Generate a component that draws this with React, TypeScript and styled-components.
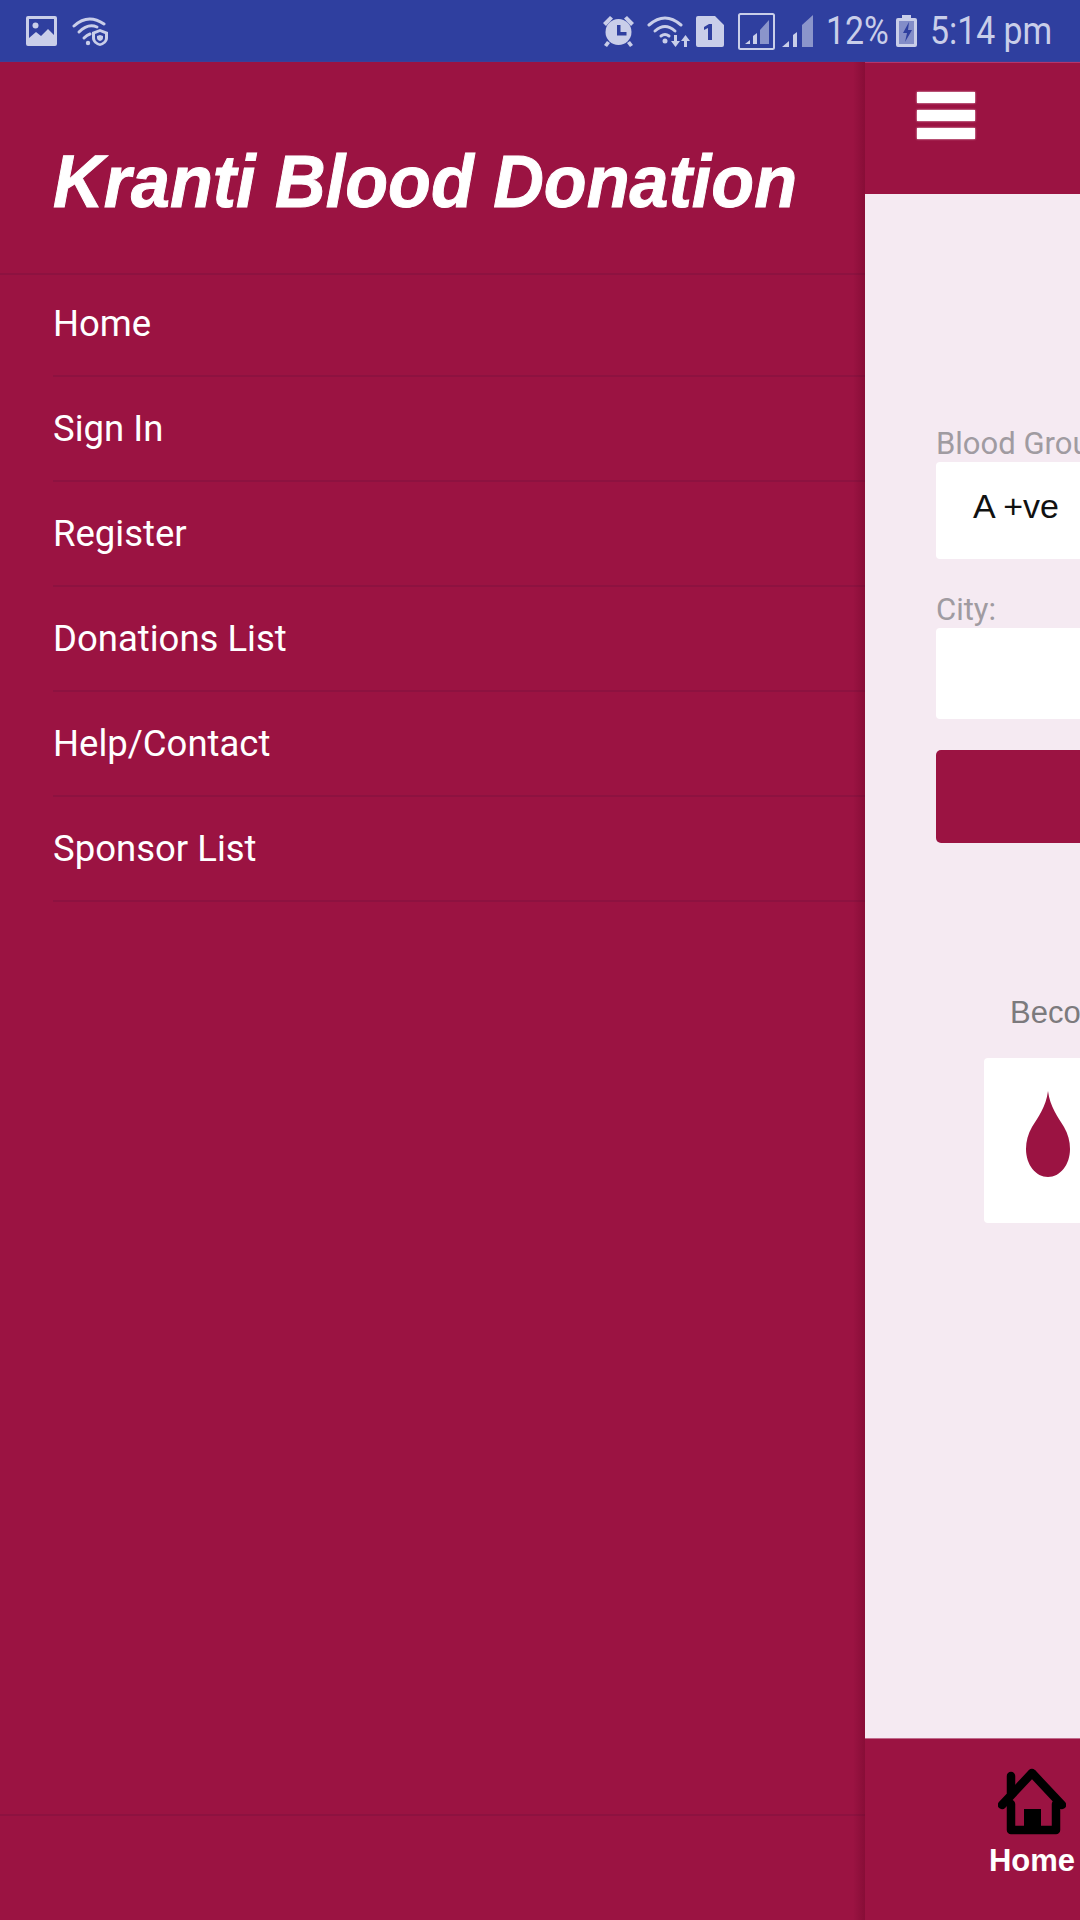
import React from "react";
import styled, { createGlobalStyle } from "styled-components";

const Global = createGlobalStyle`
  html, body { margin: 0; padding: 0; background: #9b1342; }
  * { box-sizing: border-box; }
`;

const Page = styled.div`
  width: 1080px; height: 1920px; overflow: hidden;
  display: flex; flex-direction: column;
  font-family: "Liberation Sans", Arial, sans-serif;
  background: #9b1342;
`;

const StatusBar = styled.header`
  height: 62px; flex: none; background: #2f3f9f; color: #c9cee9;
  display: flex; align-items: center; padding: 0 29px 0 26px;
  box-shadow: inset 0 -1px 0 #3c3f98;
`;
const StatusGroup = styled.div`
  display: flex; align-items: center;
`;
const StatusRight = styled(StatusGroup)`
  margin-left: auto;
`;
const StatusSlot = styled.div<{ $left: number }>`
  margin-left: ${(p) => p.$left}px; flex: none;
`;
const StatusText = styled.span<{ $width: number }>`
  font-family: Roboto, sans-serif; font-size: 38px; line-height: 42px;
  display: block; width: ${(p) => p.$width}px; white-space: nowrap;
  transform: scaleX(0.89); transform-origin: left center;
`;
const StatusIcon = styled.svg`
  display: block; flex: none; fill: currentColor;
`;

const Body = styled.div`
  flex: 1; display: flex; min-height: 0;
`;
const Drawer = styled.nav`
  width: 865px; flex: none; display: flex; flex-direction: column;
  background: #9b1342; color: #fff; position: relative;
  &::after {
    content: ""; position: absolute; top: 0; bottom: 0; right: 0; width: 12px;
    background: linear-gradient(to right, rgba(90, 0, 30, 0), rgba(90, 0, 30, 0.3));
  }
`;
const DrawerHeader = styled.div`
  height: 213px; flex: none; padding: 81px 0 0 53px;
  border-bottom: 2px solid #8d1240;
`;
const Title = styled.h1`
  margin: 0; font-size: 75px; line-height: 76px; font-weight: 700; font-style: italic;
  white-space: nowrap; display: inline-block;
  -webkit-text-stroke: 1px #fff;
  transform: scaleX(0.935); transform-origin: left center;
`;
const MenuList = styled.ul`
  list-style: none; margin: 0; padding: 0 0 0 53px; flex: 1;
`;
const MenuItem = styled.li`
  height: 105px; display: flex; align-items: center;
  border-bottom: 2px solid #8d1240;
  font-family: Roboto, sans-serif; font-size: 36.5px; color: #fff;
  &:first-child { height: 102px; padding-bottom: 3px; }
`;
const DrawerFooter = styled.div`
  height: 106px; flex: none; border-top: 2px solid #8d1240;
`;

const Panel = styled.main`
  flex: 1; min-width: 0; display: flex; flex-direction: column; overflow: hidden;
  background: #f5eaf2;
`;
const TopBar = styled.div`
  height: 132px; flex: none; background: #9b1342; padding: 30px 0 0 52px;
  box-shadow: inset 0 1px 0 #b5346a;
`;
const Burger = styled.div`
  width: 58px; display: flex; flex-direction: column; gap: 7px;
`;
const BurgerBar = styled.span`
  display: block; height: 11px; background: #fff; box-shadow: 0 0 2px #f3d5e1;
`;
const Content = styled.div`
  flex: 1; min-height: 0; padding: 232px 0 0 71px; width: 600px;
`;
const Label = styled.div`
  font-family: Roboto, sans-serif; font-size: 31px; line-height: 36px; height: 36px; color: #a09ba1; white-space: nowrap;
`;
const Field = styled.div<{ $height: number }>`
  height: ${(p) => p.$height}px; background: #fff; border-radius: 4px;
  padding: 0 0 8px 37px; display: flex; align-items: center;
  font-size: 34px; color: #111; margin-bottom: 33px;
`;
const Submit = styled.div`
  height: 93px; margin-top: -2px; background: #9b1342; border-radius: 5px;
`;
const Invite = styled.div`
  margin: 154px 0 29px 74px; font-size: 31px; line-height: 32px; color: #7c7a7d; white-space: nowrap;
`;
const Card = styled.div`
  margin-left: 48px; height: 165px; width: 300px; background: #fff; border-radius: 4px;
  padding: 33px 0 0 42px;
`;
const BottomBar = styled.div`
  height: 182px; flex: none; background: #9b1342; padding: 30px 0 0 125px;
  box-shadow: inset 0 1px 0 #c06a8c;
`;
const Tab = styled.div`
  width: 84px; display: flex; flex-direction: column; align-items: center; gap: 14px;
  font-size: 31px; line-height: 24px; font-weight: 700; color: #fff;
`;

const ImageIcon = () => (
  <StatusIcon width="31" height="30" viewBox="0 0 31 30">
    <path fillRule="evenodd" d="M2 0h27a2 2 0 0 1 2 2v26a2 2 0 0 1-2 2H2a2 2 0 0 1-2-2V2a2 2 0 0 1 2-2zM3 3v19l7-6 5 4 7-7 6 6V3z" />
    <circle cx="9.5" cy="9.5" r="3" />
  </StatusIcon>
);
const WifiShieldIcon = () => (
  <StatusIcon width="37" height="30" viewBox="0 0 37 30">
    <g fill="none" stroke="currentColor" strokeWidth="3" strokeLinecap="round">
      <path d="M2 10 Q16 -3 32 8" />
      <path d="M7 16 Q16 7 25 11" />
      <path d="M12 22 Q15 19 18 18" />
    </g>
    <circle cx="16" cy="27" r="2.2" />
    <path fillRule="evenodd" d="M28 13l8 3v6c0 4-4 7-8 8-4-1-8-4-8-8v-6zM28 16l-5 2v4c0 3 2.500 4.500 5 5.500 2.500-1 5-2.500 5-5.500v-4z" />
    <path d="M28 19l3 1v2c0 1.500-1.500 2.500-3 3-1.500-.5-3-1.500-3-3v-2z" />
  </StatusIcon>
);
const AlarmIcon = () => (
  <StatusIcon width="31" height="32" viewBox="0 0 31 32">
    <circle cx="15.500" cy="17" r="13" />
    <path d="M0 8 L7 1 L10 3.500 L3 11z M31 8 L24 1 L21 3.500 L28 11z M4 26l3 2-3 4-3-2z M27 26l-3 2 3 4 3-2z" />
    <path d="M14 10h3.500v7h6v3.500H14z" fill="#2f3f9f" />
  </StatusIcon>
);
const WifiArrowsIcon = () => (
  <StatusIcon width="43" height="32" viewBox="0 0 43 32">
    <g fill="none" stroke="currentColor" strokeWidth="3" strokeLinecap="round">
      <path d="M2 10 Q18 -4 34 10" />
      <path d="M8 16 Q18 7 28 16" />
      <path d="M14 21 Q18 18 22 21" />
    </g>
    <circle cx="18" cy="26" r="2.500" />
    <path d="M27 20h3v6h3l-4.500 6-4.500-6h3z" />
    <path d="M37 32h3v-6h3l-4.500-6-4.500 6h3z" />
  </StatusIcon>
);
const SimIcon = () => (
  <StatusIcon width="28" height="31" viewBox="0 0 28 31">
    <path fillRule="evenodd" d="M2 0h17l9 9v20a2 2 0 0 1-2 2H2a2 2 0 0 1-2-2V2a2 2 0 0 1 2-2zM13 8l-5 3v3l4-2v12h4V8z" />
  </StatusIcon>
);
const SignalBoxIcon = () => (
  <StatusIcon width="37" height="37" viewBox="0 0 37 37">
    <rect x="1" y="1" width="35" height="35" rx="1.500" fill="none" stroke="currentColor" strokeWidth="2" />
    <path d="M7 31l5-4v4z" />
    <path d="M15 31v-8l4-3v11z" />
    <path d="M22 31V17l9-10v24z" opacity="0.6" />
  </StatusIcon>
);
const SignalIcon = () => (
  <StatusIcon width="31" height="32" viewBox="0 0 31 32">
    <path d="M0 32l7-6v6z" />
    <path d="M11 32V20l4-3v15z" />
    <path d="M20 32V10L31 0v32z" opacity="0.6" />
  </StatusIcon>
);
const BatteryIcon = () => (
  <StatusIcon width="21" height="32" viewBox="0 0 21 32">
    <path fillRule="evenodd" d="M6 0h9v3h4a2 2 0 0 1 2 2v25a2 2 0 0 1-2 2H2a2 2 0 0 1-2-2V5a2 2 0 0 1 2-2h4zM3 6v23h15V6z" />
    <path d="M3 6h15v23H3z" opacity="0.55" />
    <path d="M13 7l-6 11h4l-2 9 7-12h-4z" fill="#2f3f9f" />
  </StatusIcon>
);
const DropIcon = () => (
  <svg width="44" height="86" viewBox="0 0 44 86" style={{ display: "block" }}>
    <path d="M22 0 C24 16 32 26 38 36 C42 43 44 50 44 58 C44 74 34 86 22 86 C10 86 0 74 0 58 C0 50 2 43 6 36 C12 26 20 16 22 0z" fill="#9b1342" />
  </svg>
);
const HomeIcon = () => (
  <svg width="68" height="67" viewBox="0 0 68 67" style={{ display: "block" }}>
    <g fill="none" stroke="#000" strokeWidth="8.500" strokeLinecap="round" strokeLinejoin="round">
      <path d="M4 37 L34 5 L64 37" />
      <path d="M13 25 V8" />
      <path d="M13 36 V62 H58 V36" />
    </g>
    <rect x="26" y="41" width="17" height="20" fill="#000" />
  </svg>
);

const menu = ["Home", "Sign In", "Register", "Donations List", "Help/Contact", "Sponsor List"];

export default function App() {
  return (
    <Page>
      <Global />
      <StatusBar>
        <StatusGroup>
          <StatusSlot $left={0}><ImageIcon /></StatusSlot>
          <StatusSlot $left={15}><WifiShieldIcon /></StatusSlot>
        </StatusGroup>
        <StatusRight>
          <StatusSlot $left={0}><AlarmIcon /></StatusSlot>
          <StatusSlot $left={13}><WifiArrowsIcon /></StatusSlot>
          <StatusSlot $left={6}><SimIcon /></StatusSlot>
          <StatusSlot $left={14}><SignalBoxIcon /></StatusSlot>
          <StatusSlot $left={7}><SignalIcon /></StatusSlot>
          <StatusSlot $left={13}><StatusText $width={60}>12%</StatusText></StatusSlot>
          <StatusSlot $left={10}><BatteryIcon /></StatusSlot>
          <StatusSlot $left={13}><StatusText $width={121}>5:14 pm</StatusText></StatusSlot>
        </StatusRight>
      </StatusBar>
      <Body>
        <Drawer>
          <DrawerHeader>
            <Title>Kranti Blood Donation</Title>
          </DrawerHeader>
          <MenuList>
            {menu.map((m) => (
              <MenuItem key={m}>{m}</MenuItem>
            ))}
          </MenuList>
          <DrawerFooter />
        </Drawer>
        <Panel>
          <TopBar>
            <Burger>
              <BurgerBar />
              <BurgerBar />
              <BurgerBar />
            </Burger>
          </TopBar>
          <Content>
            <Label>Blood Group:</Label>
            <Field $height={97}>A +ve</Field>
            <Label>City:</Label>
            <Field $height={91} />
            <Submit />
            <Invite>Become a Donor</Invite>
            <Card>
              <DropIcon />
            </Card>
          </Content>
          <BottomBar>
            <Tab>
              <HomeIcon />
              Home
            </Tab>
          </BottomBar>
        </Panel>
      </Body>
    </Page>
  );
}
